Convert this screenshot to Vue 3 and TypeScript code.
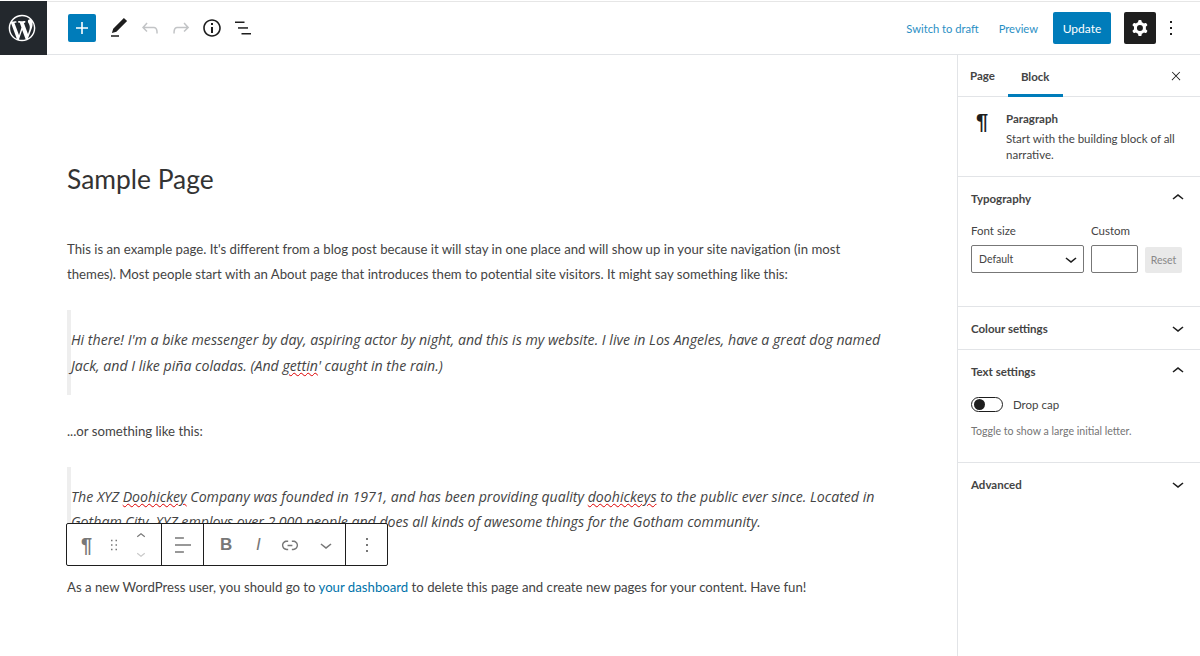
<template>
  <div class="editor">
    <header class="topbar">
      <a class="logo">
        <svg width="32" height="32" viewBox="-2 -2 24 24" fill="#fff"><path d="M20 10c0-5.51-4.49-10-10-10C4.48 0 0 4.49 0 10c0 5.52 4.48 10 10 10 5.51 0 10-4.48 10-10zM7.78 15.37L4.37 6.22c.55-.02 1.17-.08 1.17-.08.5-.06.44-1.13-.06-1.11 0 0-1.45.11-2.37.11-.18 0-.37 0-.58-.01C4.12 2.69 6.87 1.11 10 1.11c2.33 0 4.45.87 6.05 2.34-.68-.11-1.65.39-1.65 1.58 0 .74.45 1.36.9 2.1.35.61.55 1.36.55 2.46 0 1.49-1.4 5-1.4 5l-3.03-8.37c.54-.02.82-.17.82-.17.5-.05.44-1.25-.06-1.22 0 0-1.44.12-2.38.12-.87 0-2.33-.12-2.33-.12-.5-.03-.56 1.2-.06 1.22l.92.08 1.26 3.41zM17.41 10c.24-.64.74-1.87.43-4.25.7 1.29 1.05 2.71 1.05 4.25 0 3.29-1.73 6.24-4.4 7.78.97-2.59 1.94-5.2 2.92-7.78zM6.1 18.09C3.12 16.65 1.11 13.53 1.11 10c0-1.3.23-2.48.72-3.59C3.25 10.3 4.67 14.2 6.1 18.09zm4.03-6.63l2.58 6.98c-.86.29-1.76.45-2.71.45-.79 0-1.57-.11-2.29-.33.81-2.38 1.62-4.74 2.42-7.1z"/></svg>
      </a>
      <div class="tools">
        <button class="add">
          <svg width="24" height="24" viewBox="0 0 24 24" fill="#fff"><path d="M18 11.2h-5.2V6h-1.6v5.2H6v1.6h5.2V18h1.6v-5.2H18z"/></svg>
        </button>
        <svg v-for="t in headerTools" :key="t.id" class="tool" width="24" height="24" viewBox="0 0 24 24" :fill="t.off ? '#c2c4c6' : '#1e1e1e'"><path :d="t.d"/></svg>
        <svg class="tool" width="24" height="24" viewBox="0 0 24 24" fill="#1e1e1e"><rect x="4" y="5.5" width="9.5" height="1.5"/><rect x="7" y="11.2" width="10" height="1.5"/><rect x="10.5" y="17" width="9.5" height="1.5"/></svg>
      </div>
      <div class="actions">
        <a class="link draft">Switch to draft</a>
        <a class="link preview">Preview</a>
        <button class="update">Update</button>
        <button class="cog">
          <svg width="24" height="24" viewBox="0 0 24 24" fill="#fff"><path fill-rule="evenodd" d="M10.289 4.836A1 1 0 0111.275 4h1.306a1 1 0 01.987.836l.244 1.466c.787.26 1.503.679 2.108 1.218l1.393-.522a1 1 0 011.216.437l.653 1.13a1 1 0 01-.23 1.273l-1.148.944a6.025 6.025 0 010 2.435l1.149.946a1 1 0 01.23 1.272l-.653 1.13a1 1 0 01-1.216.437l-1.394-.522c-.605.54-1.32.958-2.108 1.218l-.244 1.466a1 1 0 01-.987.836h-1.306a1 1 0 01-.986-.836l-.244-1.466a5.995 5.995 0 01-2.108-1.218l-1.394.522a1 1 0 01-1.217-.436l-.653-1.131a1 1 0 01.23-1.272l1.149-.946a6.026 6.026 0 010-2.435l-1.148-.944a1 1 0 01-.23-1.272l.653-1.131a1 1 0 011.217-.437l1.393.522a5.994 5.994 0 012.108-1.218l.244-1.466zM14.929 12a3 3 0 11-6 0 3 3 0 016 0z"/></svg>
        </button>
        <svg class="more" width="24" height="24" viewBox="0 0 24 24" fill="#1e1e1e"><path :d="icons.more"/></svg>
      </div>
    </header>

    <div class="body">
      <main class="content">
        <h1 class="title">Sample Page</h1>
        <p class="para">This is an example page. It's different from a blog post because it will stay in one place and will show up in your site navigation (in most themes). Most people start with an About page that introduces them to potential site visitors. It might say something like this:</p>
        <blockquote class="quote">Hi there! I'm a bike messenger by day, aspiring actor by night, and this is my website. I live in Los Angeles, have a great dog named Jack, and I like piña coladas. (And <span class="typo">gettin</span>' caught in the rain.)</blockquote>
        <p class="para">...or something like this:</p>
        <blockquote class="quote">The XYZ <span class="typo">Doohickey</span> Company was founded in 1971, and has been providing quality <span class="typo">doohickeys</span> to the public ever since. Located in Gotham City, XYZ employs over 2,000 people and does all kinds of awesome things for the Gotham community.</blockquote>
        <p class="para">As a new WordPress user, you should go to <a class="inline-link">your dashboard</a> to delete this page and create new pages for your content. Have fun!</p>

        <div class="block-toolbar">
          <div class="group first">
            <span class="glyph para-mark">¶</span>
            <svg class="handle" width="18" height="18" viewBox="0 0 24 24" fill="#777"><path d="M8 7h2V5H8v2zm0 6h2v-2H8v2zm0 6h2v-2H8v2zm6-14v2h2V5h-2zm0 8h2v-2h-2v2zm0 6h2v-2h-2v2z"/></svg>
            <div class="movers">
              <svg width="24" height="24" viewBox="0 0 24 24" fill="#777"><path :d="icons.up"/></svg>
              <svg width="24" height="24" viewBox="0 0 24 24" fill="#c9c9c9"><path :d="icons.down"/></svg>
            </div>
          </div>
          <div class="group second">
            <svg width="24" height="24" viewBox="0 0 24 24" fill="#777"><path d="M4 19.8h8.9v-1.5H4v1.5zm8.9-15.6H4v1.5h8.9V4.2zm-8.9 7v1.5h16v-1.5H4z"/></svg>
          </div>
          <div class="group third">
            <span class="glyph bold">B</span>
            <span class="glyph italic">I</span>
            <svg class="link-icon" width="22" height="22" viewBox="0 0 24 24" fill="#777"><path d="M15.6 7.2H14v1.5h1.6c2 0 3.7 1.7 3.7 3.7s-1.7 3.7-3.7 3.7H14v1.5h1.6c2.8 0 5.2-2.3 5.2-5.2 0-2.9-2.3-5.2-5.2-5.2zM4.7 12.4c0-2 1.7-3.7 3.7-3.7H10V7.2H8.4c-2.9 0-5.2 2.3-5.2 5.2 0 2.9 2.3 5.2 5.2 5.2H10v-1.5H8.4c-2 0-3.7-1.7-3.7-3.7zm4.6.9h5.3v-1.5H9.3v1.5z"/></svg>
            <svg class="chev-icon" width="24" height="24" viewBox="0 0 24 24" fill="#777"><path :d="icons.down"/></svg>
          </div>
          <div class="group fourth">
            <svg width="24" height="24" viewBox="0 0 24 24" fill="#777"><path :d="icons.more"/></svg>
          </div>
        </div>
      </main>

      <aside class="sidebar">
        <div class="tabs">
          <span class="tab">Page</span>
          <span class="tab active">Block</span>
          <svg class="close" width="14" height="14" viewBox="0 0 24 24" fill="#1e1e1e"><path d="M13 11.8l6.1-6.3-1-1-6.1 6.2-6.1-6.2-1 1 6.1 6.3-6.5 6.7 1 1 6.5-6.6 6.5 6.6 1-1z"/></svg>
        </div>
        <div class="block-card">
          <span class="card-mark">¶</span>
          <div>
            <div class="card-title">Paragraph</div>
            <div class="card-desc">Start with the building block of all narrative.</div>
          </div>
        </div>
        <section class="panel typography">
          <div class="panel-head"><span>Typography</span><svg width="24" height="24" viewBox="0 0 24 24" fill="#1e1e1e"><path :d="icons.up"/></svg></div>
          <div class="fields">
            <label class="field size">
              <span>Font size</span>
              <div class="select">Default<svg width="24" height="24" viewBox="0 0 24 24" fill="#1e1e1e"><path :d="icons.down"/></svg></div>
            </label>
            <label class="field custom">
              <span>Custom</span>
              <div class="number"></div>
            </label>
            <button class="reset">Reset</button>
          </div>
        </section>
        <section class="panel closed">
          <div class="panel-head"><span>Colour settings</span><svg width="24" height="24" viewBox="0 0 24 24" fill="#1e1e1e"><path :d="icons.down"/></svg></div>
        </section>
        <section class="panel text-settings">
          <div class="panel-head"><span>Text settings</span><svg width="24" height="24" viewBox="0 0 24 24" fill="#1e1e1e"><path :d="icons.up"/></svg></div>
          <div class="toggle-row"><span class="toggle"><i></i></span><span>Drop cap</span></div>
          <p class="help">Toggle to show a large initial letter.</p>
        </section>
        <section class="panel closed no-line">
          <div class="panel-head"><span>Advanced</span><svg width="24" height="24" viewBox="0 0 24 24" fill="#1e1e1e"><path :d="icons.down"/></svg></div>
        </section>
      </aside>
    </div>
  </div>
</template>

<script setup lang="ts">
const icons = {
  up: 'M6.5 12.4L12 8l5.5 4.4-.9 1.2L12 10l-4.5 3.6-1-1.2z',
  down: 'M17.5 11.6L12 16l-5.5-4.4.9-1.2L12 14l4.5-3.6 1 1.2z',
  more: 'M13 19h-2v-2h2v2zm0-6h-2v-2h2v2zm0-6h-2V5h2v2z'
}

const headerTools = [
  { id: 'edit', off: false, d: 'M20.1 5.1L16.9 2 6.2 12.7l-1.3 4.4 4.5-1.3L20.1 5.1zM4 20.8h8v-1.5H4v1.5z' },
  { id: 'undo', off: true, d: 'M18.3 11.7c-.6-.6-1.4-.9-2.3-.9H6.7l2.9-3.3-1.1-1-4.5 5L8.5 16l1-1-2.7-2.7H16c.5 0 .9.2 1.3.5 1 1 1 3.4 1 4.5v.3h1.5v-.2c0-1.5 0-4.3-1.5-5.7z' },
  { id: 'redo', off: true, d: 'M15.6 6.5l-1.1 1 2.9 3.3H8c-.9 0-1.7.3-2.3.9-1.4 1.5-1.4 4.2-1.4 5.6v.2h1.5v-.3c0-1.1 0-3.5 1-4.5.3-.3.7-.5 1.3-.5h9.2L14.5 15l1.1 1.1 4.6-4.6-4.6-5z' },
  { id: 'info', off: false, d: 'M12 3.2c-4.8 0-8.8 3.9-8.8 8.8 0 4.8 3.9 8.8 8.8 8.8 4.8 0 8.8-3.9 8.8-8.8 0-4.8-4-8.8-8.8-8.8zm0 16c-4 0-7.2-3.3-7.2-7.2C4.8 8 8 4.8 12 4.8s7.2 3.3 7.2 7.2c0 4-3.2 7.2-7.2 7.2zM11 17h2v-6h-2v6zm0-8h2V7h-2v2z' }
]
</script>

<style>
html, body { margin: 0; background: #fff; overflow: hidden; }
</style>

<style scoped>
.editor {
  width: 1200px;
  height: 656px;
  padding-top: 1px;
  box-sizing: border-box;
  display: flex;
  flex-direction: column;
  font-family: Lato, sans-serif;
  font-size: 11.5px;
  color: #1e1e1e;
  overflow: hidden;
}
.topbar {
  height: 54px;
  flex: none;
  box-sizing: border-box;
  display: flex;
  align-items: center;
  border-top: 1px solid #e6e6e6;
  border-bottom: 1px solid #e2e4e7;
}
.logo {
  width: 47px;
  height: 54px;
  margin-top: -1px;
  padding-right: 3px;
  box-sizing: border-box;
  background: #23282d;
  display: flex;
  align-items: center;
  justify-content: center;
}
.tools {
  display: flex;
  align-items: center;
  padding-left: 21px;
  gap: 7px;
}
.add {
  width: 28px;
  height: 28px;
  padding: 0;
  border: none;
  border-radius: 2px;
  background: #007cba;
  display: flex;
  align-items: center;
  justify-content: center;
  margin-right: 4px;
}
.actions {
  margin-left: auto;
  display: flex;
  align-items: center;
}
.link { color: #007cba; opacity: .85; font-size: 11.2px; }
.draft { margin-right: 20px; }
.preview { margin-right: 15px; }
.update {
  width: 58px;
  height: 32px;
  border: none;
  border-radius: 2px;
  background: #007cba;
  color: #fff;
  font: inherit;
  font-size: 12px;
  padding: 0;
}
.cog {
  width: 32px;
  height: 32px;
  margin-left: 13px;
  padding: 0;
  border: none;
  border-radius: 2px;
  background: #1e1e1e;
  display: flex;
  align-items: center;
  justify-content: center;
}
.more { margin: 0 17px 0 3px; }

.body { flex: 1; display: flex; min-height: 0; }
.content {
  flex: 1;
  position: relative;
  padding: 0 71px 0 67px;
  color: #444;
  font-size: 13.2px;
  line-height: 25.2px;
}
.title {
  margin: 106px 0 0;
  font-size: 26.4px;
  font-weight: 400;
  line-height: 36px;
  color: #333;
  height: 76px;
}
.para { margin: 0 0 22.5px; }
.quote {
  margin: 0 0 23.5px;
  padding: 17.5px 0;
  border-left: 4px solid #eee;
  font-family: "Open Sans", sans-serif;
  font-size: 14.15px;
  font-style: italic;
}
.typo { text-decoration: underline wavy #d00; text-decoration-thickness: 1px; }
.inline-link { color: #0073aa; }
.block-toolbar {
  position: absolute;
  left: 66px;
  top: 468px;
  height: 41px;
  display: flex;
  background: #fff;
  border: 1px solid #1e1e1e;
  border-radius: 2px;
  color: #777;
}
.group {
  display: flex;
  align-items: center;
  height: 100%;
  border-right: 1px solid #1e1e1e;
  box-sizing: border-box;
}
.group:last-child { border-right: none; }
.first { width: 95px; padding-left: 15px; }
.second { width: 42px; justify-content: center; }
.third { width: 142px; padding-left: 16px; }
.fourth { width: 41px; justify-content: center; }
.glyph { font-family: "Liberation Sans", sans-serif; line-height: 1; }
.para-mark { font-size: 20px; font-weight: 700; width: 14px; margin-left: -1px; }
.handle { margin-left: 10px; }
.movers { display: flex; flex-direction: column; margin-left: 6px; height: 36px; justify-content: center; }
.movers svg { height: 18px; }
.bold { font-size: 17px; font-weight: 700; width: 15px; }
.italic { font-size: 17px; font-style: italic; margin-left: 21px; width: 6px; }
.link-icon { margin-left: 17px; }
.chev-icon { margin-left: 13px; }

.sidebar {
  width: 243px;
  flex: none;
  box-sizing: border-box;
  border-left: 1px solid #e2e4e7;
}
.tabs {
  height: 41px;
  display: flex;
  align-items: stretch;
  border-bottom: 1px solid #e2e4e7;
  font-weight: 700;
  color: #444;
}
.tab { padding: 0 13px; display: flex; align-items: center; box-sizing: border-box; }
.tab:first-child { padding-left: 12px; }
.active { box-shadow: inset 0 -3px #007cba; margin-bottom: -1px; }
.close { margin: auto 17px auto auto; }
.block-card {
  display: flex;
  height: 80px;
  box-sizing: border-box;
  padding: 14px 16px 0 18px;
  border-bottom: 1px solid #e2e4e7;
}
.card-mark { font-family: "Liberation Sans", sans-serif; font-weight: 700; font-size: 22px; width: 30px; flex: none; line-height: 20px; margin-top: 1px; }
.card-title { font-weight: 700; line-height: 16px; color: #444; }
.card-desc { line-height: 16px; margin-top: 4px; color: #444; }
.panel { border-bottom: 1px solid #e2e4e7; padding: 0 13px; box-sizing: border-box; }
.panel-head {
  height: 42px;
  display: flex;
  align-items: center;
  justify-content: space-between;
  font-weight: 700;
  color: #444;
  margin-right: -3px;
}
.typography { height: 130px; }
.closed { height: 43px; }
.text-settings { height: 113px; }
.no-line { border-bottom: none; }
.fields { display: flex; align-items: flex-end; margin-top: 4px; }
.field { display: flex; flex-direction: column; color: #444; }
.field > span { line-height: 16px; margin-bottom: 6px; }
.size { width: 113px; margin-right: 7px; }
.select {
  height: 26px;
  border: 1px solid #777;
  border-radius: 2px;
  display: flex;
  align-items: center;
  justify-content: space-between;
  padding-left: 7px;
  font-size: 10.5px;
}
.custom { width: 47px; margin-right: 7px; }
.number { height: 26px; border: 1px solid #777; border-radius: 2px; }
.reset {
  width: 37px;
  height: 26px;
  padding: 0;
  border: none;
  border-radius: 2px;
  background: #e9e9e9;
  color: #888;
  font: inherit;
  font-size: 10.5px;
}
.toggle-row { display: flex; align-items: center; gap: 10px; color: #444; margin-top: 4px; height: 16px; }
.toggle {
  width: 28px;
  height: 13px;
  border: 1px solid #1e1e1e;
  border-radius: 9px;
  display: flex;
  align-items: center;
  padding-left: 2px;
}
.toggle i { width: 11px; height: 11px; border-radius: 50%; background: #1e1e1e; }
.help { margin: 12px 0 0; font-size: 10.6px; line-height: 14px; color: #757575; }
</style>
